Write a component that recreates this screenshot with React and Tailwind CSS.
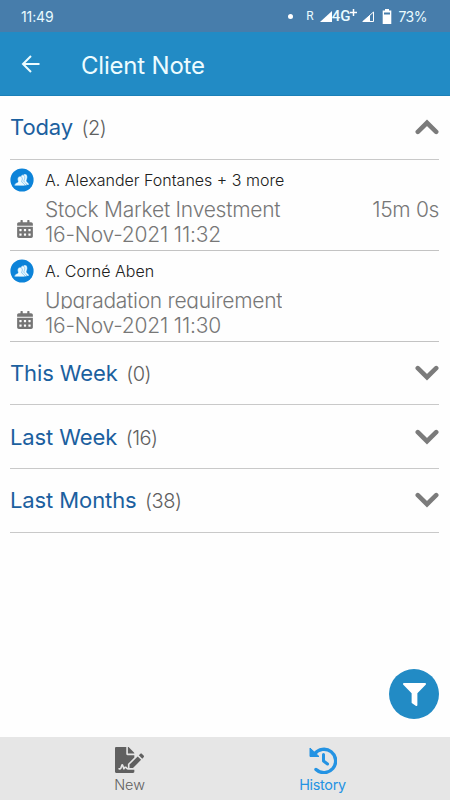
import { useState } from "react";
import { FaCalendarAlt, FaFileSignature, FaFilter } from "react-icons/fa";

const notes = [
  {
    id: 1,
    client: "A. Alexander Fontanes + 3 more",
    title: "Stock Market Investment",
    titleClass: "tracking-[-0.24px]",
    duration: "15m 0s",
    date: "16-Nov-2021 11:32",
  },
  {
    id: 2,
    client: "A. Corné Aben",
    title: "Upgradation requirement",
    titleClass: "overflow-hidden tracking-[-0.28px]",
    duration: "",
    date: "16-Nov-2021 11:30",
  },
];

const groups = [
  { key: "today", label: "Today", count: 2, notes },
  { key: "week", label: "This Week", count: 0, notes: [] },
  { key: "lastWeek", label: "Last Week", count: 16, notes: [] },
  { key: "lastMonths", label: "Last Months", count: 38, notes: [] },
];

function StatusBar() {
  return (
    <div className="flex h-8 shrink-0 items-center justify-between bg-[#477dab] pl-[21px] pr-[23px] text-[14px] font-normal text-[#e9fbff]">
      <span className="tracking-[-0.1px]">11:49</span>
      <div className="flex items-center">
        <span className="mr-[13px] size-[5px] rounded-full bg-white" />
        <span className="mr-[6px] font-[Roboto] text-[12px]">R</span>
        <svg width="12" height="11" viewBox="0 0 12 11" fill="white">
          <path d="M12 0v11H0z" />
        </svg>
        <span className="mr-[4px] font-[Roboto] text-[15px] font-medium">4G</span>
        <svg className="-ml-[4px] -mt-[7px] mr-[5px]" width="7" height="7" viewBox="0 0 7 7" stroke="white" strokeWidth="1.500">
          <path d="M3.500 0v7M0 3.500h7" />
        </svg>
        <svg className="mr-[8px]" width="12" height="11" viewBox="0 0 12 11">
          <path d="M11.5 1v9.5H1z" fill="none" stroke="white" />
          <path d="M8 4v7H0z" fill="white" />
        </svg>
        <svg className="mr-[6px]" width="10" height="15" viewBox="0 0 10 15">
          <path d="M3 0h4v1.5h2.3V15H.7V1.5H3z" fill="white" />
          <path d="M2 3.5h6v2H2z" fill="#477dab" />
        </svg>
        <span className="tracking-[-0.5px]">73%</span>
      </div>
    </div>
  );
}

function Header() {
  return (
    <header className="flex h-16 shrink-0 items-center border-b border-[#1b80b8] bg-[#228bc5] pl-[21px] text-[#edfcff]">
      <svg width="19" height="18" viewBox="0 0 19 18" fill="none" stroke="currentColor" strokeWidth="2">
        <path d="M18.5 9H2M10 1L2 9l8 8" />
      </svg>
      <h1 className="ml-[41px] mt-1 text-[24px] font-normal leading-8 tracking-[-0.2px]">Client Note</h1>
    </header>
  );
}

function Chevron({ open }) {
  return (
    <svg
      className={open ? "" : "rotate-180"}
      width="24"
      height="16"
      viewBox="0 0 24 16"
      fill="none"
      stroke="#7b7b7b"
      strokeWidth="4.600"
    >
      <path d="M2.800 12.800L12 3.800 21.200 12.800" strokeLinecap="round" />
    </svg>
  );
}

function ClientAvatar() {
  return (
    <svg width="24" height="24" viewBox="0 0 24 24">
      <circle cx="12" cy="12" r="11.6" fill="#0c83d9" />
      <g fill="#edfaff" stroke="#0c83d9" strokeWidth="0.4">
        <path d="M13 15c-.7-1.600-1.200-3-1-5 .2-2.500 1.500-4.200 3-4.100 1.700.1 2.500 1.700 2.300 3.500-.1 1.500-.8 2.500-.8 3.500.1 1.200 2.600 1.600 2.600 4h-4z" />
        <path d="M10 15c1-.8 1.100-1.300.6-2.300-.9-1.600-.6-4.600 1-5.500 1.800-1 3.400.4 3.200 2.600-.1 1.500-1.100 2.500-.9 3.500.2 1.100 2.800 1.600 2.800 4.300H9z" />
        <path d="M4.500 17.800c0-2.900 3.200-2.900 3.600-4 .2-.7-.7-1.600-.5-3 .2-1.700 1.300-2.600 2.600-2.500 1.600.1 2.300 1.500 2.100 3-.1 1.200-.8 1.800-.6 2.600.3 1 3 1.300 3.200 3.900z" />
      </g>
    </svg>
  );
}

function NoteRow({ note }) {
  return (
    <div className="flex h-[91px] border-b border-[#c3c3c3]">
      <div className="flex w-[35px] shrink-0 flex-col">
        <div className="mt-2">
          <ClientAvatar />
        </div>
        <FaCalendarAlt className="ml-[7px] mt-[28px] h-[18px] w-4 text-[#757575]" />
      </div>
      <div className="min-w-0 flex-1 whitespace-nowrap pt-[10px]">
        <p className="text-[16px] leading-[20px] text-[#202020]">{note.client}</p>
        <div className="mt-[8px] flex h-[20px] justify-between text-[21px] leading-[24px] text-[#777]">
          <span className={note.titleClass}>{note.title}</span>
          <span className="tracking-[-0.35px]">{note.duration}</span>
        </div>
        <p className="mt-[4px] text-[21px] leading-[26px] tracking-[-0.18px] text-[#777]">{note.date}</p>
      </div>
    </div>
  );
}

function Group({ group, open, onToggle }) {
  return (
    <section>
      <button
        onClick={onToggle}
        className="flex h-[63.700px] w-full items-center justify-between border-b border-[#c9c9c9]"
      >
        <span className="flex items-baseline gap-[8.500px] pt-px">
          <span className="text-[22px] font-normal tracking-[-0.1px] text-[#1b609f]">{group.label}</span>
          <span className="text-[20px] tracking-[-0.5px] text-[#606060]">({group.count})</span>
        </span>
        <Chevron open={open} />
      </button>
      {open && group.notes.map((note) => <NoteRow key={note.id} note={note} />)}
    </section>
  );
}

function HistoryIcon() {
  return (
    <svg width="28" height="28" viewBox="0 0 28 28" fill="none" stroke="currentColor">
      <path d="M5.500 8A11.700 11.700 0 1 1 7 23.500" strokeWidth="3.400" strokeLinecap="round" />
      <path d="M1 2v8.500h9z" fill="currentColor" strokeWidth="1" strokeLinejoin="round" />
      <path d="M14.500 8.500v6.500l4 3" strokeWidth="3" strokeLinecap="round" strokeLinejoin="round" />
    </svg>
  );
}

function BottomNav() {
  return (
    <nav className="flex h-[63px] shrink-0 bg-[#e6e6e6] pl-[33px] pr-[31px] text-[14.400px]">
      <button className="flex flex-1 flex-col items-center pt-[10px] text-[#606060]">
        <FaFileSignature className="h-[26px] w-[29px]" />
        <span className="leading-6">New</span>
      </button>
      <button className="flex flex-1 flex-col items-center pt-[9px] text-[#2493e3]">
        <HistoryIcon />
        <span className="-mt-px font-normal leading-6 tracking-[-0.3px]">History</span>
      </button>
    </nav>
  );
}

export default function App() {
  const [openKey, setOpenKey] = useState("today");

  return (
    <div className="relative flex h-[800px] w-[450px] flex-col overflow-hidden bg-[#fefefe] font-[Inter,sans-serif] font-light">
      <StatusBar />
      <Header />
      <main className="flex-1 pl-[10px] pr-[11px]">
        {groups.map((group) => (
          <Group
            key={group.key}
            group={group}
            open={openKey === group.key}
            onToggle={() => setOpenKey(openKey === group.key ? null : group.key)}
          />
        ))}
      </main>

      {/* Filter button */}
      <button className="absolute bottom-[81px] right-[11px] flex size-[50px] items-center justify-center rounded-full bg-[#228bc5] text-white">
        <FaFilter className="size-[23px]" />
      </button>

      <BottomNav />
    </div>
  );
}
